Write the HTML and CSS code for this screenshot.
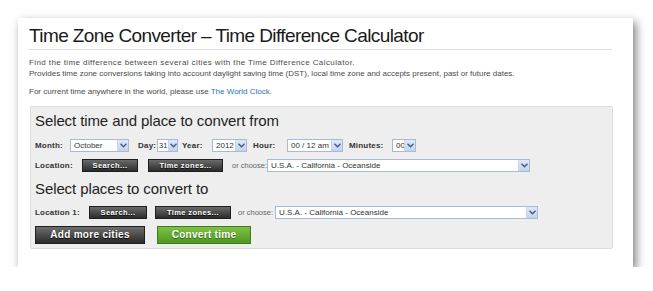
FILE: index.html
```html
<!DOCTYPE html>
<html>
  <head>
    <meta charset="utf-8" />
    <title>Time Zone Converter</title>
    <link rel="stylesheet" href="styles.css">
  </head>
  <body>
    <div class="card">
      <h1>Time Zone Converter – Time Difference Calculator</h1>

      <div class="intro">
        <p><span class="wide">Find the time difference between several cities with the Time Difference Calculator.</span><br>
        Provides time zone conversions taking into account daylight saving time (DST), local time zone and accepts present, past or future dates.</p>
        <p>For current time anywhere in the world, please use <a href="#">The World Clock</a>.</p>
      </div>

      <div class="panel">
        <h2>Select time and place to convert from</h2>
        <div class="row row-time">
          <span class="label lbl-month">Month:</span>
          <div class="select sel-month"><span class="sel-text">October</span><span class="sel-arrow"><svg width="7" height="5" viewBox="0 0 7 5"><path d="M0.5 0.8 L3.5 3.8 L6.5 0.8" fill="none" stroke="#3f5a8a" stroke-width="1.4"/></svg></span></div>
          <span class="label lbl-day">Day:</span>
          <div class="select sel-day"><span class="sel-text">31</span><span class="sel-arrow"><svg width="7" height="5" viewBox="0 0 7 5"><path d="M0.5 0.8 L3.5 3.8 L6.5 0.8" fill="none" stroke="#3f5a8a" stroke-width="1.4"/></svg></span></div>
          <span class="label lbl-year">Year:</span>
          <div class="select sel-year"><span class="sel-text">2012</span><span class="sel-arrow"><svg width="7" height="5" viewBox="0 0 7 5"><path d="M0.5 0.8 L3.5 3.8 L6.5 0.8" fill="none" stroke="#3f5a8a" stroke-width="1.4"/></svg></span></div>
          <span class="label lbl-hour">Hour:</span>
          <div class="select sel-hour"><span class="sel-text">00 / 12 am</span><span class="sel-arrow"><svg width="7" height="5" viewBox="0 0 7 5"><path d="M0.5 0.8 L3.5 3.8 L6.5 0.8" fill="none" stroke="#3f5a8a" stroke-width="1.4"/></svg></span></div>
          <span class="label lbl-min">Minutes:</span>
          <div class="select sel-min"><span class="sel-text">00</span><span class="sel-arrow"><svg width="7" height="5" viewBox="0 0 7 5"><path d="M0.5 0.8 L3.5 3.8 L6.5 0.8" fill="none" stroke="#3f5a8a" stroke-width="1.4"/></svg></span></div>
        </div>
        <div class="row row-loc">
          <span class="label lbl-loc">Location:</span>
          <button class="btn btn-small btn-search">Search...</button>
          <button class="btn btn-small btn-zones">Time zones...</button>
          <span class="choose">or choose:</span>
          <div class="select sel-city"><span class="sel-text">U.S.A. - California - Oceanside</span><span class="sel-arrow"><svg width="7" height="5" viewBox="0 0 7 5"><path d="M0.5 0.8 L3.5 3.8 L6.5 0.8" fill="none" stroke="#3f5a8a" stroke-width="1.4"/></svg></span></div>
        </div>

        <h2 class="h2-to">Select places to convert to</h2>
        <div class="row row-loc1">
          <span class="label lbl-loc1">Location 1:</span>
          <button class="btn btn-small btn-search2">Search...</button>
          <button class="btn btn-small btn-zones2">Time zones...</button>
          <span class="choose choose2">or choose:</span>
          <div class="select sel-city"><span class="sel-text">U.S.A. - California - Oceanside</span><span class="sel-arrow"><svg width="7" height="5" viewBox="0 0 7 5"><path d="M0.5 0.8 L3.5 3.8 L6.5 0.8" fill="none" stroke="#3f5a8a" stroke-width="1.4"/></svg></span></div>
        </div>
        <div class="row row-actions">
          <button class="btn btn-big btn-add">Add more cities</button>
          <button class="btn btn-big btn-convert">Convert time</button>
        </div>
      </div>
    </div>
  </body>
</html>
```

FILE: styles.css
```css
body {
  margin: 0;
  padding: 18px 0 0 18px;
  background: #ffffff;
  font-family: 'Liberation Sans', Arial, sans-serif;
  color: #333;
}
.card {
  width: 604px;
  height: 243px;
  padding: 6px 0 0 11px;
  background: #ffffff;
  box-shadow: 3px 4px 9px rgba(0,0,0,0.5);
}
h1 {
  width: 583px;
  margin: 0;
  padding-bottom: 1px;
  font-size: 19px;
  letter-spacing: -0.6px;
  line-height: 24px;
  font-weight: normal;
  color: #1a1a1a;
  border-bottom: 1px solid #dcdcdc;
}
.intro {
  font-size: 8px;
  line-height: 10.5px;
  color: #4a4a4a;
  margin-top: 8px;
}
.intro p {
  margin: 0 0 8px 0;
}
.intro .wide {
  letter-spacing: 0.4px;
}
.intro a {
  color: #2a72c0;
  text-decoration: none;
}
.panel {
  width: 577px;
  height: 136px;
  margin: 0 0 0 1px;
  padding: 5px 0 0 4px;
  background: #eeeeee;
  border: 1px solid #dcdcdc;
  border-radius: 2px;
}
h2 {
  margin: 0;
  font-size: 15px;
  letter-spacing: -0.1px;
  line-height: 18px;
  font-weight: normal;
  color: #1e1e1e;
}
.row {
  display: flex;
  align-items: center;
}
.row > * {
  flex-shrink: 0;
}
.row-time {
  margin-top: 9px;
  height: 14px;
}
.row-loc {
  margin-top: 6px;
  height: 13px;
}
.h2-to {
  margin-top: 8px;
}
.row-loc1 {
  margin-top: 8px;
  height: 14px;
}
.row-actions {
  margin-top: 6px;
  gap: 12px;
}
.label {
  font-size: 8px;
  font-weight: bold;
  letter-spacing: 0.2px;
  color: #333;
  white-space: nowrap;
}
.lbl-month { width: 35px; }
.lbl-day { width: 19px; }
.lbl-year { width: 30px; }
.lbl-hour { width: 34px; }
.lbl-min { width: 43px; }
.lbl-loc { width: 47px; }
.lbl-loc1 { width: 54px; }
.select {
  display: flex;
  align-items: stretch;
  box-sizing: border-box;
  height: 13px;
  background: #ffffff;
  border: 1px solid #a9bad3;
  font-size: 8px;
  color: #333;
}
.sel-text {
  flex: 1;
  padding-left: 3px;
  line-height: 11px;
  white-space: nowrap;
  overflow: hidden;
}
.sel-arrow {
  width: 10px;
  display: flex;
  align-items: center;
  justify-content: center;
  background: linear-gradient(#dfe8f7, #c3d3ef);
  border-left: 1px solid #c9d6ea;
}
.sel-month { width: 59px; margin-right: 9px; }
.sel-day { width: 21px; margin-right: 4px; font-size: 7.5px; }
.sel-day .sel-text { padding-left: 1px; }
.sel-day .sel-arrow { width: 8px; }
.sel-year { width: 35px; margin-right: 6px; }
.sel-hour { width: 56px; margin-right: 6px; }
.sel-min { width: 24px; }
.sel-city { width: 263px; }
.btn {
  box-sizing: border-box;
  border: 1px solid #1e1e1e;
  color: #ffffff;
  font-family: 'Liberation Sans', Arial, sans-serif;
  font-weight: bold;
  padding: 0;
  cursor: pointer;
  text-shadow: 0 1px 1px #000;
}
.btn-small {
  height: 13px;
  font-size: 7.5px;
  letter-spacing: 0.4px;
  background: linear-gradient(#6b6b6b, #2c2c2c);
}
.btn-search { width: 56px; margin-right: 10px; }
.btn-zones { width: 75px; margin-right: 9px; }
.btn-search2 { width: 58px; margin-right: 8px; }
.btn-zones2 { width: 76px; margin-right: 7px; }
.choose {
  width: 35px;
  font-size: 7.5px;
  color: #666;
  white-space: nowrap;
}
.choose2 { width: 37px; }
.btn-big {
  height: 18px;
  font-size: 10px;
  letter-spacing: 0.3px;
}
.btn-add {
  width: 110px;
  background: linear-gradient(#6e6e6e, #2a2a2a);
}
.btn-convert {
  width: 94px;
  border-color: #3f7d1c;
  background: linear-gradient(#80c043, #4f9a22);
  text-shadow: 0 1px 1px #2c5a10;
}
```
